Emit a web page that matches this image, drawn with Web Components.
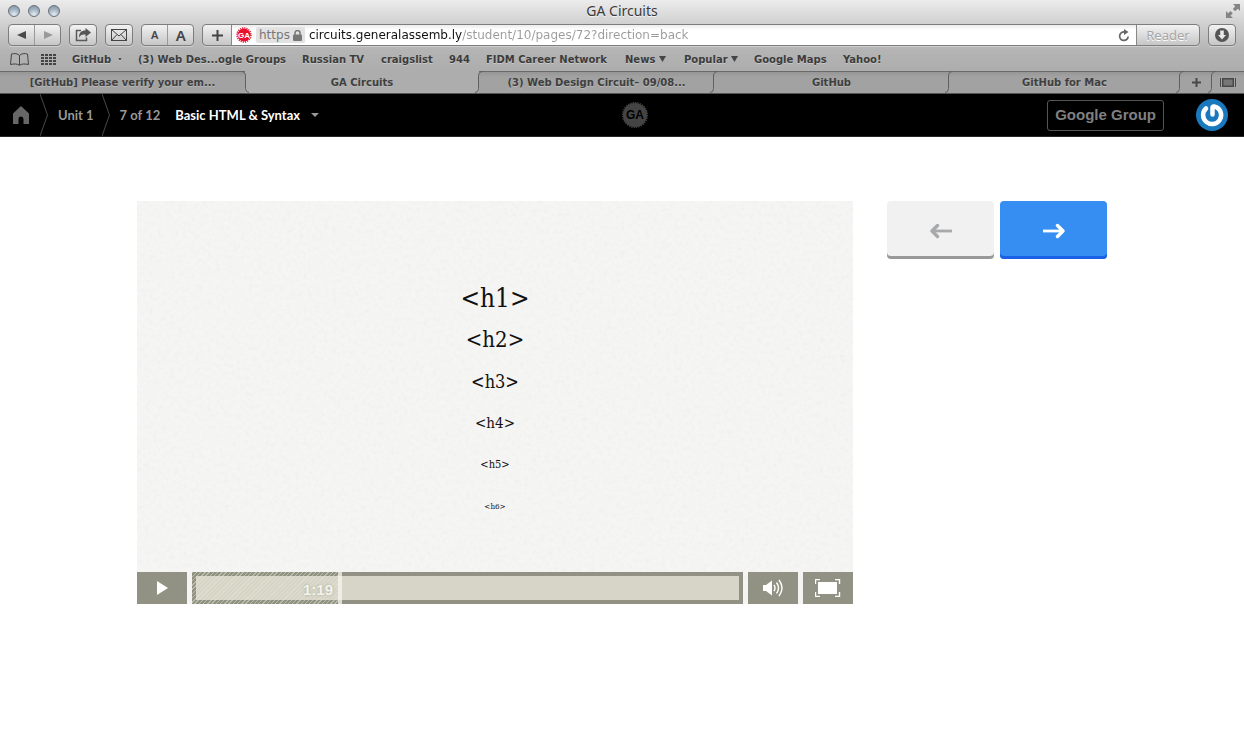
<!DOCTYPE html>
<html lang="en">
<head>
<meta charset="utf-8">
<title>GA Circuits</title>
<style>
  html, body { margin: 0; min-height: 100%; background: #fff; }
  body { font-family: "Noto Sans", "Open Sans", sans-serif; color: #333; }
</style>
</head>
<body>
<browser-window>
  <app-header></app-header>
  <lesson-page></lesson-page>
</browser-window>

<template id="t-window">
  <style>
    :host { display: block; }
    .chrome { background: linear-gradient(#ececec, #d2d2d2 22px, #b4b4b4 50px, #adadad 71px, #adadad); }
  </style>
  <div class="chrome">
    <title-bar>GA Circuits</title-bar>
    <tool-bar></tool-bar>
    <bookmark-bar></bookmark-bar>
    <tab-bar></tab-bar>
  </div>
  <slot></slot>
</template>

<template id="t-title">
  <style>
    :host { display: grid; grid-template-columns: 60px 1fr 64px; align-items: center; height: 24px; box-sizing: border-box; padding: 0 4px 2px 8px; font-size: 14px; line-height: 20px; color: #3a3a3a; text-shadow: 0 1px 0 #f4f4f4; }
    .lights { display: flex; gap: 8px; }
    .lights button { width: 12px; height: 12px; padding: 0; border: 1px solid #68727d; border-radius: 50%; background: radial-gradient(circle at 50% 85%, #e4edf5, #a3b2c0 55%, #7f8e9c); }
    .t { text-align: center; }
    svg { display: block; margin-left: auto; }
  </style>
  <div class="lights"><button aria-label="Close"></button><button aria-label="Minimize"></button><button aria-label="Zoom"></button></div>
  <div class="t"><slot></slot></div>
  <svg width="14" height="14" viewBox="0 0 14 14" fill="#858585"><path d="M7 0h7v7l-2.200-2.200-2.600 2.500-2.300-2.300L9.200 2.200zM0 7l2.200 2.200 2.300-2.300 2.300 2.300-2.300 2.600L7 14H0z"/></svg>
</template>

<template id="t-tool">
  <style>
    :host { display: flex; gap: 8px; padding: 0 8px; height: 22px; }
    button { font: inherit; margin: 0; padding: 0; border: 0; background: none; color: #444; display: flex; align-items: center; justify-content: center; }
    .box { display: flex; box-sizing: border-box; height: 22px; border: 1px solid #7d7d7d; border-radius: 4px; background: linear-gradient(#f2f2f2, #c6c6c6); box-shadow: 0 1px 0 #cfcfcf; overflow: hidden; }
    .box > button { width: 26px; }
    .pair { width: 53px; }
    .pair > button + button { border-left: 1px solid #999; }
    .small { font-size: 11px; font-weight: 600; line-height: 16px; }
    .large { font-size: 15px; font-weight: 600; line-height: 18px; }
    .field { flex: 1; min-width: 0; }
    .field > .plus { width: 28px; }
    .url { flex: 1; min-width: 0; display: flex; align-items: center; gap: 4px; padding: 0 6px 0 4px; background: linear-gradient(#ececec, #fff 5px); border: solid #888; border-width: 0 1px; }
    .https { display: flex; align-items: center; gap: 3px; height: 16px; padding: 0 3px; border-radius: 2px; background: #e2e2e2; font: 12px/16px "DejaVu Sans", sans-serif; color: #777; }
    input { flex: 1; min-width: 0; border: 0; outline: 0; padding: 0; height: 20px; font: 12px/20px "DejaVu Sans", sans-serif; color: transparent; background: linear-gradient(90deg, #111 153px, #9b9b9b 153px); -webkit-background-clip: text; background-clip: text; }
    .box > .reader { width: 62px; font-size: 13px; color: #a6a6a6; text-shadow: 0 1px 0 #fff; }
    .logo { font: bold 8px "Liberation Sans", sans-serif; }
  </style>
  <div class="box pair">
    <button aria-label="Back"><svg width="10" height="8"><path d="M0 4 9 0v8z" fill="#4a4a4a"/></svg></button>
    <button aria-label="Forward"><svg width="10" height="8"><path d="M10 4 1 0v8z" fill="#9a9a9a"/></svg></button>
  </div>
  <div class="box"><button aria-label="Share"><svg width="16" height="14" viewBox="0 0 16 14"><path d="M6 2.500H1.500v10h10V9.500" fill="none" stroke="#5a5a5a" stroke-width="1.500"/><path d="M16 4.500 10.500 0v2.500C6 2.500 4 5 4 9.500 5.500 7 7 6.500 10.500 6.500V9z" fill="#555"/></svg></button></div>
  <div class="box"><button aria-label="Mail"><svg width="16" height="12" viewBox="0 0 16 12" fill="none" stroke="#444"><rect x=".5" y=".5" width="15" height="11"/><path d="m.5.500 7.500 6.500 7.500-6.500M.5 11.500 6 5.500M15.500 11.500 10 5.500"/></svg></button></div>
  <div class="box pair"><button class="small">A</button><button class="large">A</button></div>
  <div class="box field">
    <button class="plus" aria-label="Add bookmark"><svg width="11" height="11"><path d="M5.500 0v11M0 5.500h11" stroke="#444" stroke-width="2"/></svg></button>
    <div class="url">
      <svg width="16" height="16" viewBox="0 0 16 16"><circle cx="8" cy="8" r="6.500" fill="#e8112d"/><circle cx="8" cy="8" r="7" fill="none" stroke="#e8112d" stroke-width="1.500" stroke-dasharray="1.200 1"/><text class="logo" x="8" y="11" text-anchor="middle" fill="#fff">GA</text></svg>
      <span class="https">https <svg width="9" height="11" viewBox="0 0 9 11"><path d="M2 5V3a2.500 2.500 0 0 1 5 0v2" fill="none" stroke="#777" stroke-width="1.500"/><rect y="4.500" width="9" height="6.500" rx="1" fill="#777"/></svg></span>
      <input aria-label="Address" value="circuits.generalassemb.ly/student/10/pages/72?direction=back">
      <button aria-label="Reload"><svg width="12" height="13" viewBox="0 0 12 13"><path d="M10.200 7.500A4.300 4.300 0 1 1 7 3" fill="none" stroke="#666" stroke-width="1.700"/><path d="M6 0v6l4.500-3z" fill="#666"/></svg></button>
    </div>
    <button class="reader">Reader</button>
  </div>
  <div class="box"><button aria-label="Downloads"><svg width="14" height="14" viewBox="0 0 14 14"><circle cx="7" cy="7" r="7" fill="#555"/><path d="M5.200 2.500h3.600V7H11l-4 4.500L3 7h2.200z" fill="#e8e8e8"/></svg></button></div>
</template>

<template id="t-marks">
  <style>
    :host { display: grid; grid-template-columns: 31px 31px 66px 164px 79px 68px 37px 139px 59px 70px 89px 1fr; align-items: center; height: 25px; box-sizing: border-box; padding: 2px 0 0 10px; font: 700 10px/16px "DejaVu Sans", sans-serif; }
    a { color: #3c3c3c; text-decoration: none; white-space: nowrap; text-shadow: 0 1px 0 #c8c8c8; }
    svg { display: block; }
    .tri { display: inline-block; vertical-align: 1px; }
    button { border: 0; background: none; padding: 0; }
  </style>
  <button aria-label="Show bookmarks"><svg width="19" height="13" viewBox="0 0 19 13" fill="none" stroke="#444"><path d="M9.500 2.500C7.500.500 4.500.200 1.500 1L.5 11.500c3.500-.8 7-.8 9 .8 2-1.600 5.500-1.600 9-.8L17.500 1c-3-.8-6-.5-8 1.500zM9.500 2.500v9.500"/></svg></button>
  <button aria-label="Top sites"><svg width="15" height="11" viewBox="0 0 15 11"><path d="M0 1h15M0 4h15M0 7h15M0 10h15" stroke="#444" stroke-width="2" stroke-dasharray="3 1"/></svg></button>
  <a href="#">GitHub&nbsp; ·</a><a href="#">(3) Web Des...ogle Groups</a><a href="#">Russian TV</a><a href="#">craigslist</a><a href="#">944</a><a href="#">FIDM Career Network</a>
  <a href="#">News <svg class="tri" width="7" height="6"><path d="M0 0h7L3.500 6z" fill="#444"/></svg></a>
  <a href="#">Popular <svg class="tri" width="7" height="6"><path d="M0 0h7L3.500 6z" fill="#444"/></svg></a>
  <a href="#">Google Maps</a><a href="#">Yahoo!</a>
</template>

<template id="t-tabs">
  <style>
    :host { display: grid; grid-template-columns: 245fr 234fr 235fr 235fr 231fr 32px 32px; height: 23px; box-sizing: border-box; border-bottom: 1px solid #555; }
  </style>
  <browser-tab edge="out">[GitHub] Please verify your em...</browser-tab>
  <browser-tab active>GA Circuits</browser-tab>
  <browser-tab>(3) Web Design Circuit– 09/08...</browser-tab>
  <browser-tab>GitHub</browser-tab>
  <browser-tab>GitHub for Mac</browser-tab>
  <browser-tab label="New tab"><svg width="9" height="9"><path d="M4.500 0v9M0 4.500h9" stroke="#484848" stroke-width="2"/></svg></browser-tab>
  <browser-tab last label="Show all tabs"><svg width="16" height="9"><path d="M.5 0v9M15.500 0v9" stroke="#484848"/><path d="M2 0h12v9H2z" fill="#484848"/><path d="M3.500 1.500h9v6h-9z" fill="#777"/></svg></browser-tab>
</template>

<template id="t-tab">
  <style>
    :host { display: block; position: relative; min-width: 0; }
    button { display: flex; align-items: center; justify-content: center; width: 100%; height: 22px; padding: 0 8px; border: 0; border-top: 1px solid #6a6a6a; background: linear-gradient(#969696, #a2a2a2 5px); color: #3f3f3f; font: 700 10px/16px "DejaVu Sans", sans-serif; white-space: nowrap; text-shadow: 0 1px 0 #b8b8b8; }
    :host([active]) button { background: #adadad; border-top-color: #adadad; }
    .edge { position: absolute; z-index: 1; right: -4px; top: 0; fill: none; stroke: #606060; }
    :host([last]) .edge { display: none; }
  </style>
  <button><slot></slot></button>
  <svg class="edge" width="8" height="22"><path d="M8 .5Q3.500.500 3.500 5v12.500Q3.500 21.500 0 21.500"/></svg>
</template>

<template id="t-header">
  <style>
    :host { display: grid; grid-template-columns: calc(51% - 12px) 26px 1fr; align-items: center; height: 43px; box-sizing: border-box; border-bottom: 1px solid #2a2627; background: #000; font: 700 13px/18px Lato, sans-serif; color: #999; }
    nav { display: flex; align-items: center; height: 42px; padding-left: 12px; white-space: nowrap; }
    a { color: inherit; text-decoration: none; }
    svg { display: block; }
    .chev { margin: 0 10px; }
    .unit + .chev { margin-left: 8px; }
    .count { padding-right: 15px; }
    button { font: inherit; background: none; }
    .topic { display: flex; align-items: center; gap: 11px; padding: 0; border: 0; color: #fff; }
    .right { display: flex; align-items: center; justify-content: flex-end; gap: 32px; padding-right: 16px; }
    .group { box-sizing: border-box; height: 31px; padding: 0 7px; border: 1px solid #555; border-radius: 3px; font: 700 15px/20px "Liberation Sans", sans-serif; color: #808080; }
    .logo { font: bold 12px "Liberation Sans", sans-serif; }
  </style>
  <nav>
    <a href="#" aria-label="Home"><svg width="18" height="18" viewBox="0 0 18 18"><path d="M9 0 1 7.500V18h5.500v-5a2.500 2.500 0 0 1 5 0v5H17V7.500z" fill="#666"/></svg></a>
    <svg class="chev" width="8" height="42"><path d="M0 0 7.500 21 0 42" fill="none" stroke="#4a4a4a"/></svg>
    <a class="unit" href="#">Unit 1</a>
    <svg class="chev" width="8" height="42"><path d="M0 0 7.500 21 0 42" fill="none" stroke="#4a4a4a"/></svg>
    <span class="count">7 of 12</span>
    <button class="topic">Basic HTML &amp; Syntax <svg width="8" height="4"><path d="M0 0h8L4 4z" fill="#999"/></svg></button>
  </nav>
  <svg width="26" height="26" viewBox="0 0 26 26"><circle cx="13" cy="13" r="12" fill="#444"/><circle cx="13" cy="13" r="12.300" fill="none" stroke="#444" stroke-width="1.400" stroke-dasharray="1.400 1"/><text class="logo" x="13" y="17" text-anchor="middle" fill="#000">GA</text></svg>
  <div class="right">
    <button class="group">Google Group</button>
    <a href="#" aria-label="Profile"><svg width="32" height="32" viewBox="0 0 32 32"><circle cx="16" cy="16" r="16" fill="#1a78bd"/><path d="M10 9.500A9 9 0 1 0 20.500 8.200Q16.500 6.500 16.500 9V15.500" fill="none" stroke="#fff" stroke-width="4.500" stroke-linecap="round"/></svg></a>
  </div>
</template>

<template id="t-lesson">
  <style>
    :host { display: grid; grid-template-columns: minmax(0, 1fr) 220px; gap: 34px; align-items: start; max-width: 970px; margin: 0 auto; padding: 64px 16px; }
    .nav { display: grid; grid-template-columns: 1fr 1fr; gap: 6px; }
  </style>
  <video-player></video-player>
  <div class="nav"><step-button label="Previous page" direction="back"></step-button><step-button label="Next page"></step-button></div>
</template>

<template id="t-step">
  <style>
    :host { display: block; }
    button { display: flex; align-items: center; justify-content: center; width: 100%; height: 58px; padding: 2px 0 0; border: 0; border-radius: 4px; background: #368df2; box-shadow: inset 0 -3px 0 #1a5fe6; color: #fff; }
    :host([direction="back"]) button { background: #f1f1f1; box-shadow: inset 0 -3px 0 #999; color: #a7a9ab; }
    :host([direction="back"]) svg { transform: scaleX(-1); }
  </style>
  <button><svg width="22" height="16" viewBox="0 0 22 16" fill="none" stroke="currentColor" stroke-width="2.800"><path d="M0 8h20"/><path d="m14.500 2.500 5.500 5.500-5.500 5.500" stroke-width="3.400" stroke-linecap="round" stroke-linejoin="round"/></svg></button>
</template>

<template id="t-video">
  <style>
    :host { display: grid; place-items: center; position: relative; aspect-ratio: 716 / 403; background: #f5f5f4; overflow: hidden; color: #111; }
    .paper { position: absolute; inset: 0; width: 100%; height: 100%; }
    .slide { position: relative; display: grid; grid-auto-rows: 1fr; place-items: center; height: 62%; font-family: "DejaVu Serif Condensed", "DejaVu Serif", serif; line-height: 1; }
    .s1 { font-size: 26px; } .s2 { font-size: 22px; } .s3 { font-size: 18px; } .s4 { font-size: 15px; } .s5 { font-size: 11px; } .s6 { font-size: 8px; }
    .controls { position: absolute; inset: auto 0 0; display: flex; gap: 5px; height: 32px; }
    button { width: 50px; padding: 0; border: 0; background: #929284; display: flex; align-items: center; justify-content: center; }
    .track { position: relative; flex: 1; box-sizing: border-box; border: 4px solid #929284; background: #d7d5c8; }
    .played { position: absolute; inset: -4px auto -4px -4px; width: 146px; box-sizing: border-box; padding-right: 5px; text-align: right; font: 700 15px/36px "Liberation Sans", sans-serif; color: #f2f2ee; text-shadow: 0 0 3px #a5a595; background: repeating-linear-gradient(135deg, rgba(225,232,205,.5) 0 1px, transparent 1px 3px); }
    input { position: absolute; inset: -4px; width: calc(100% + 8px); height: 32px; margin: 0; appearance: none; -webkit-appearance: none; background: none; }
    input::-webkit-slider-thumb { -webkit-appearance: none; width: 4px; height: 32px; border: 0; border-radius: 0; background: rgba(245,245,242,.75); }
  </style>
  <svg class="paper" aria-hidden="true">
    <filter id="grain" x="0" y="0" width="100%" height="100%"><feTurbulence type="fractalNoise" baseFrequency=".24" numOctaves="4" seed="7"/><feColorMatrix values="0 0 0 0 .5  0 0 0 0 .5  0 0 0 0 .48  1 0 0 0 -.45"/></filter>
    <rect width="100%" height="100%" filter="url(#grain)" opacity=".2"/>
  </svg>
  <div class="slide">
    <span class="s1">&lt;h1&gt;</span><span class="s2">&lt;h2&gt;</span><span class="s3">&lt;h3&gt;</span><span class="s4">&lt;h4&gt;</span><span class="s5">&lt;h5&gt;</span><span class="s6">&lt;h6&gt;</span>
  </div>
  <div class="controls">
    <button aria-label="Play"><svg width="11" height="14"><path d="M0 0 11 7 0 14z" fill="#fff"/></svg></button>
    <div class="track"><div class="played">1:19</div><input type="range" min="0" max="296" value="79" aria-label="Seek"></div>
    <button aria-label="Volume"><svg width="22" height="18" viewBox="0 0 22 18"><path d="M1 6h3l6-4.500v15L4 12H1z" fill="#fff"/><path d="M12 6q2 3 0 6M14.500 3.500q4 5.500 0 11M17 1q6 8 0 16" fill="none" stroke="#fff" stroke-width="1.400"/></svg></button>
    <button aria-label="Full screen"><svg width="26" height="18" viewBox="0 0 26 18"><path d="M3 3h19v12H3z" fill="#fff"/><path d="M.5 5V.5H5M20 .5h4.500V5M24.500 13v4.500H20M5 17.500H.5V13" fill="none" stroke="#fff" stroke-width="1.400"/></svg></button>
  </div>
</template>

<script>
  const define = (name, id, setup) => customElements.define(name, class extends HTMLElement {
    constructor() {
      super();
      this.attachShadow({ mode: 'open' }).append(document.getElementById(id).content.cloneNode(true));
    }
    connectedCallback() {
      if (setup) setup(this, this.shadowRoot);
    }
  });
  const nameButton = (host, root) => {
    const label = host.getAttribute('label');
    if (label) root.querySelector('button').setAttribute('aria-label', label);
  };
  define('title-bar', 't-title');
  define('tool-bar', 't-tool');
  define('bookmark-bar', 't-marks');
  define('browser-tab', 't-tab', (host, root) => {
    nameButton(host, root);
    if (host.getAttribute('edge') === 'out')
      root.querySelector('.edge path').setAttribute('d', 'M0 .5Q4.500.500 4.500 5v12.500Q4.500 21.500 8 21.500');
  });
  define('tab-bar', 't-tabs');
  define('app-header', 't-header');
  define('step-button', 't-step', nameButton);
  define('video-player', 't-video');
  define('lesson-page', 't-lesson');
  define('browser-window', 't-window');
</script>
</body>
</html>
